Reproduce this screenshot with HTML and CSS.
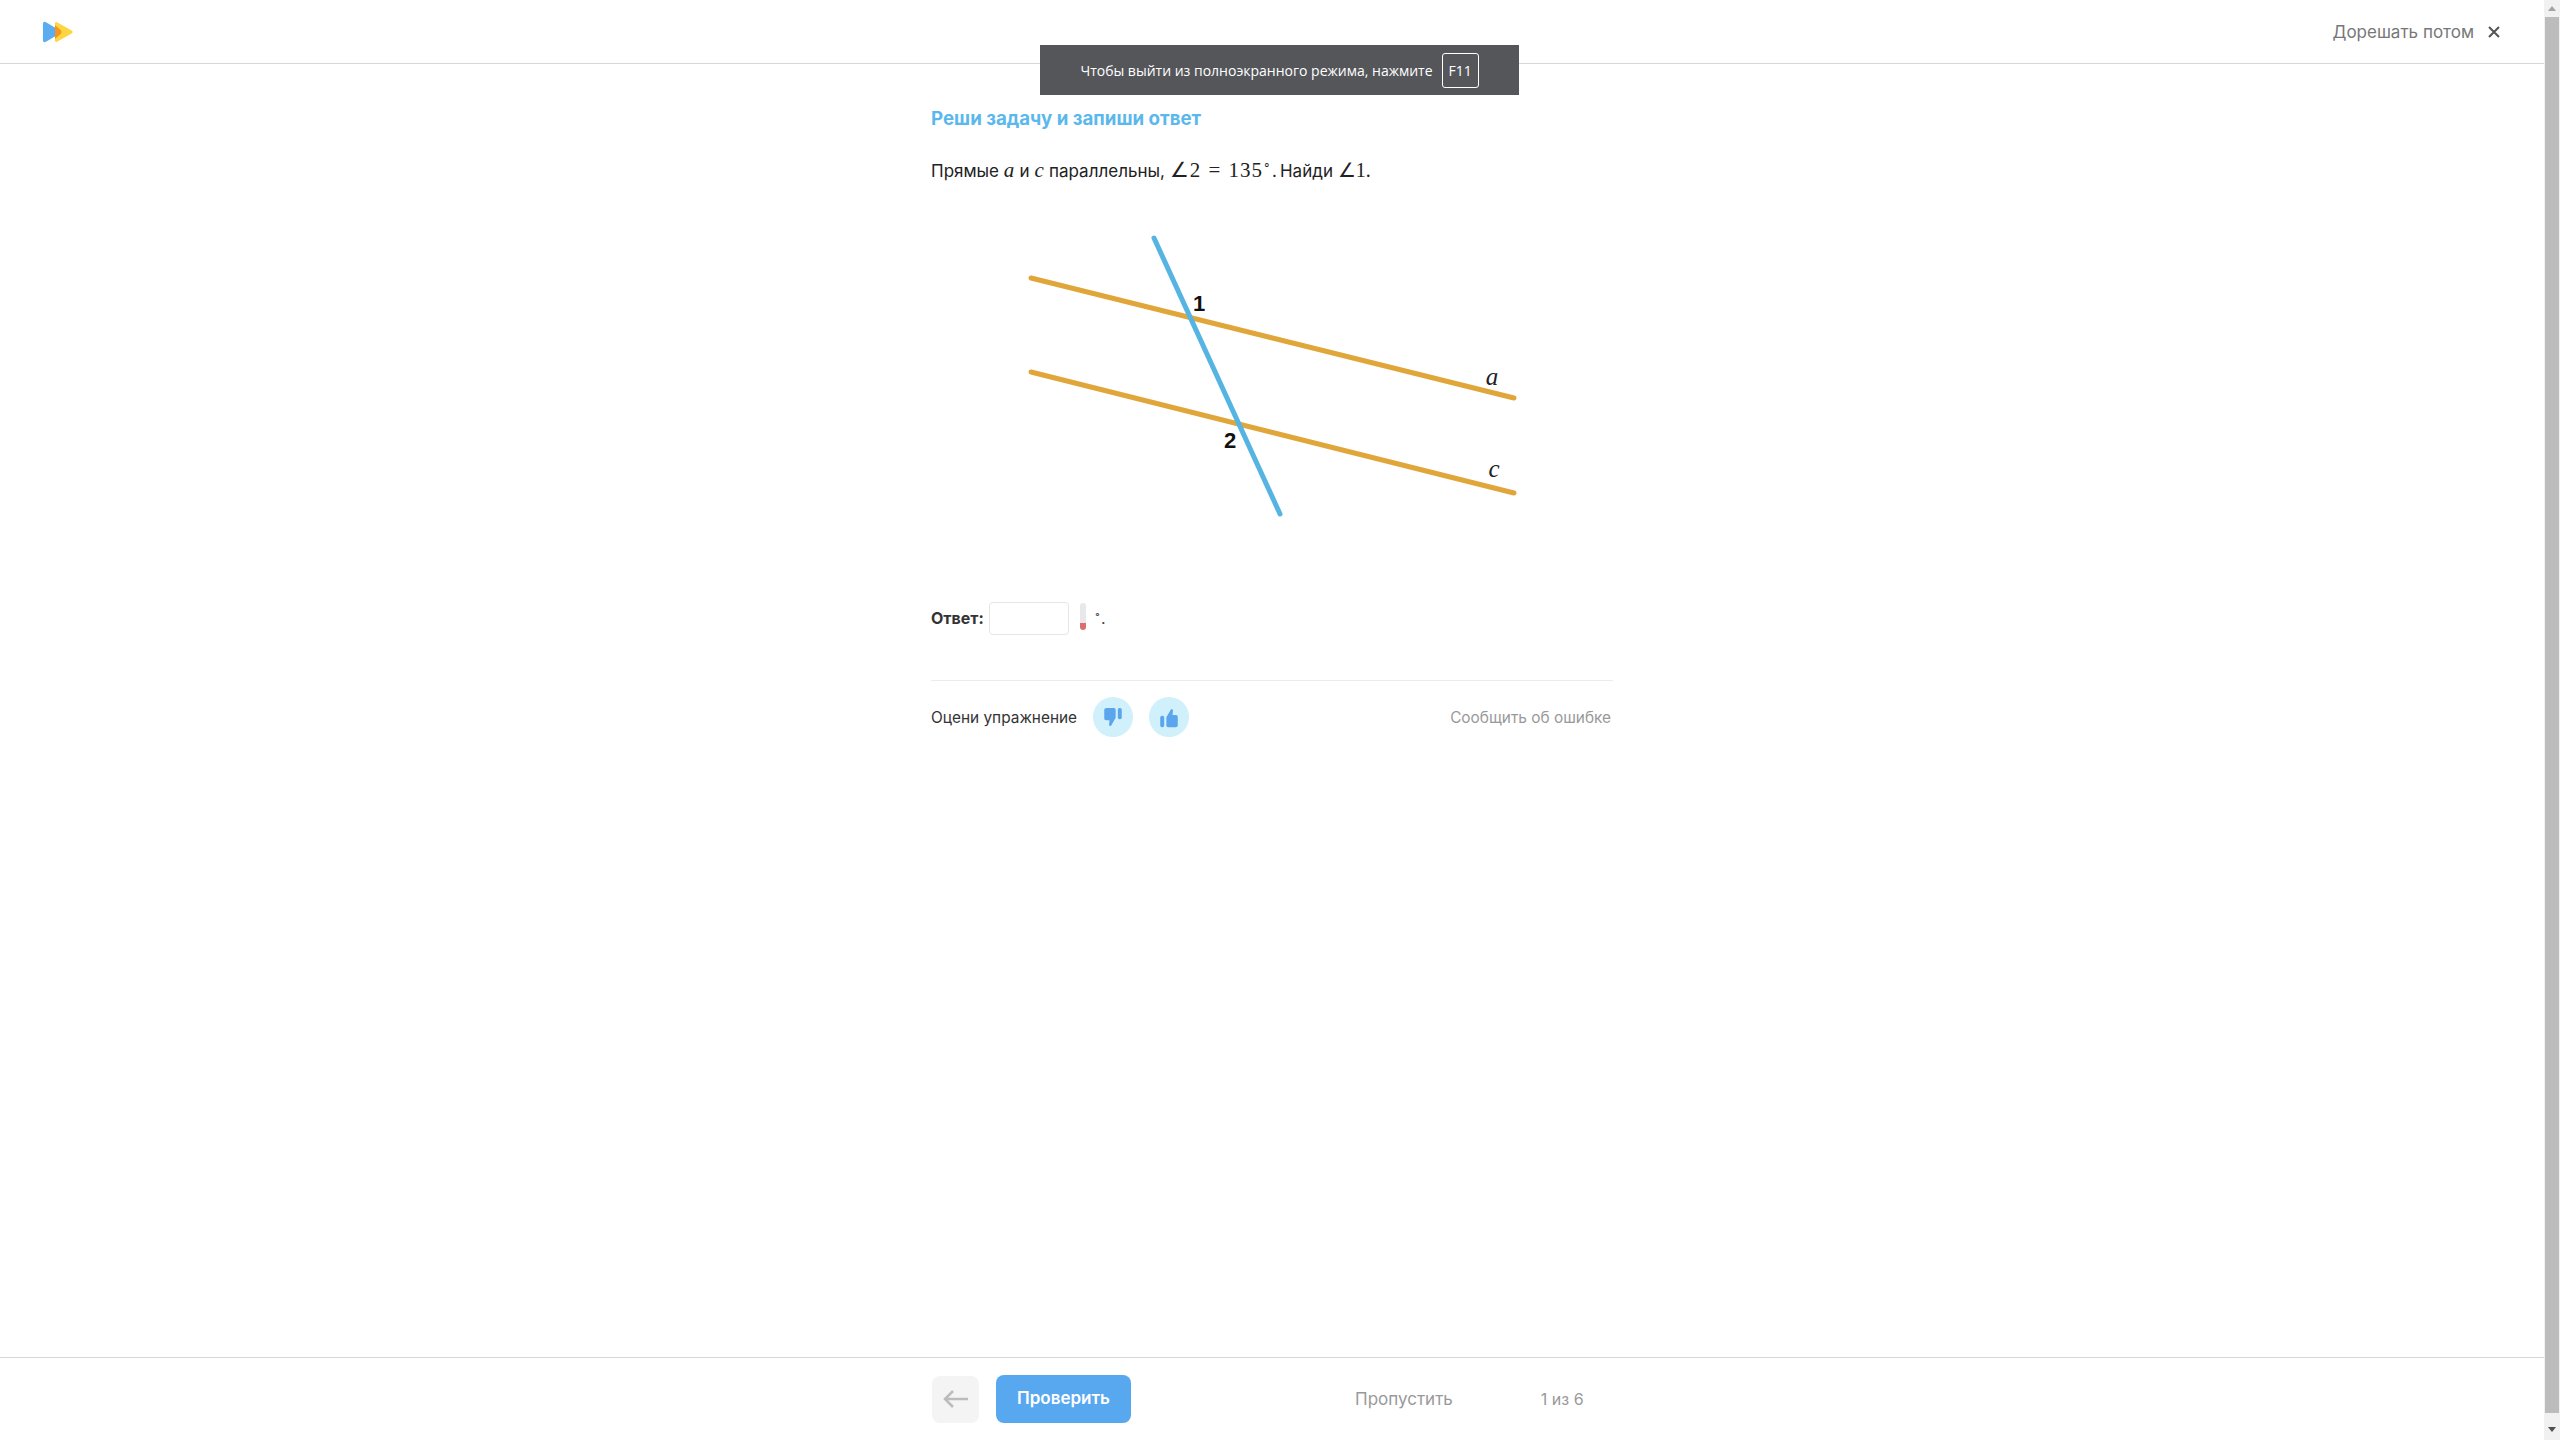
FILE: index.html
```html
<!DOCTYPE html>
<html lang="ru">
<head>
    <meta charset="UTF-8">
    <title>Реши задачу</title>
    <link rel="stylesheet" href="styles.css">
</head>
<body>
    <div class="page">
        <header class="topbar">
            <svg class="logo" width="34" height="28" viewBox="0 0 34 28">
                <path d="M3 5.500 Q3 3 5.500 4 L20 12.500 Q22 14 20 15.500 L5.500 24 Q3 25 3 22.500 Z" fill="#5aaef0"/>
                <path d="M15 5.500 Q15 3.500 17 4.200 L32 12.800 Q33.500 14 32 15.200 L17 23.800 Q15 24.500 15 22.500 Z" fill="#fbd640"/>
                <path d="M15 7 L21 12.500 Q22 14 21 15.500 L15 21 Z" fill="#f7941d"/>
            </svg>
            <div class="later">
                <span>Дорешать потом</span>
                <svg width="14" height="14" viewBox="0 0 14 14"><path d="M2 2 L12 12 M12 2 L2 12" stroke="#555" stroke-width="2"/></svg>
            </div>
        </header>

        <main class="content">
            <h1 class="task-title">Реши задачу и запиши ответ</h1>
            <p class="task-text">Прямые <i class="math">a</i> и <i class="math">c</i> параллельны, <span class="math formula">∠2 = 135<sup>∘</sup></span>.&thinsp;Найди <span class="math angle">∠1.</span></p>

            <svg class="figure" width="682" height="310" viewBox="0 0 682 310">
                <line x1="100" y1="58" x2="583" y2="178" stroke="#e0a63a" stroke-width="5" stroke-linecap="round"/>
                <line x1="100" y1="152" x2="583" y2="273" stroke="#e0a63a" stroke-width="5" stroke-linecap="round"/>
                <line x1="223" y1="18" x2="349" y2="294" stroke="#56b4e3" stroke-width="5" stroke-linecap="round"/>
                <text class="fig-num" x="268" y="91" text-anchor="middle">1</text>
                <text class="fig-num" x="299" y="228" text-anchor="middle">2</text>
                <text class="fig-var" x="561" y="165" text-anchor="middle">a</text>
                <text class="fig-var" x="563" y="257" text-anchor="middle">c</text>
            </svg>

            <div class="answer">
                <b>Ответ:</b>
                <span class="answer-input"></span>
                <span class="thermo"></span>
                <span class="unit"><sup>∘</sup>.</span>
            </div>

            <div class="rate">
                <span class="rate-label">Оцени упражнение</span>
                <button class="rate-btn">
                    <svg width="22" height="24" viewBox="0 0 22 24"><path d="M1 3 Q1 1 3.500 1 L12 1 Q14 1 14 3 L14 12 Q14 13 13 14 L9 21 Q7 23 6.500 20 L7 15 L3 15 Q1 15 1 13 Z" fill="#5aa5ec"/><rect x="16.500" y="1" width="4.500" height="13" rx="2" fill="#5aa5ec"/></svg>
                </button>
                <button class="rate-btn">
                    <svg width="22" height="24" viewBox="0 0 22 24"><path d="M21 21 Q21 23 18.500 23 L10 23 Q8 23 8 21 L8 12 Q8 11 9 10 L13 3 Q15 1 15.500 4 L15 9 L19 9 Q21 9 21 11 Z" fill="#5aa5ec"/><rect x="1" y="10" width="4.500" height="13" rx="2" fill="#5aa5ec"/></svg>
                </button>
                <span class="report">Сообщить об ошибке</span>
            </div>
        </main>

        <footer class="bottombar">
            <div class="bottom-inner">
                <button class="back">
                    <svg width="26" height="18" viewBox="0 0 26 18"><path d="M25 9 L2 9 M10 1 L2 9 L10 17" fill="none" stroke="#bcbcbc" stroke-width="2.500"/></svg>
                </button>
                <button class="check">Проверить</button>
                <span class="skip">Пропустить</span>
                <span class="counter">1 из 6</span>
            </div>
        </footer>
    </div>

    <div class="scrollbar">
        <span class="arrow-up"></span>
        <span class="thumb"></span>
        <span class="arrow-down"></span>
    </div>

    <div class="fs-notice">
        <span>Чтобы выйти из полноэкранного режима, нажмите</span>
        <kbd>F11</kbd>
    </div>
</body>
</html>
```

FILE: styles.css
```css
html, body {
    margin: 0;
    height: 100%;
    overflow: hidden;
}

body {
    display: flex;
    background: #fff;
    color: #222;
    font-family: 'Inter', 'Liberation Sans', sans-serif;
}

.page {
    flex: 1;
    display: flex;
    flex-direction: column;
    height: 1440px;
}

/* Top bar */
.topbar {
    height: 63px;
    flex: none;
    display: flex;
    align-items: center;
    justify-content: space-between;
    border-bottom: 1px solid #d8d8d8;
    padding: 0 43px 0 40px;
}

.later {
    display: flex;
    align-items: center;
    gap: 13px;
    font-size: 17px;
    color: #777;
}

/* Task */
.content {
    flex: 1;
    width: 682px;
    margin-left: 931px;
}

.task-title {
    margin: 43px 0 0;
    font-size: 18.700px;
    line-height: 24px;
    font-weight: 700;
    color: #5bb8ec;
}

.task-text {
    margin: 26px 0 0;
    font-size: 17px;
    line-height: 26px;
    color: #222;
}

.math {
    font-family: 'Liberation Serif', serif;
    font-size: 21px;
    letter-spacing: 0.5px;
}

.formula {
    word-spacing: 1px;
    letter-spacing: 1px;
}

.angle {
    letter-spacing: 0;
    font-size: 20px;
}

.math sup {
    font-size: 12px;
    line-height: 0;
}

.figure {
    display: block;
    margin-top: 36px;
}

.fig-num {
    font-family: 'Liberation Sans', sans-serif;
    font-size: 22px;
    font-weight: 700;
    fill: #111;
}

.fig-var {
    font-family: 'Liberation Serif', serif;
    font-style: italic;
    font-size: 25px;
    fill: #222;
}

/* Answer */
.answer {
    display: flex;
    align-items: center;
    margin-top: 70px;
    height: 36px;
    font-size: 16px;
}

.answer b {
    color: #333;
}

.answer-input {
    width: 78px;
    height: 31px;
    margin-left: 5px;
    border: 1.500px solid #e6e6e6;
    border-radius: 4px;
}

.thermo {
    width: 6px;
    height: 27px;
    margin: -4px 0 0 11px;
    border-radius: 3px;
    background: linear-gradient(#e8e8ec 75%, #d9706f 75%);
}

.unit {
    margin-left: 8px;
    color: #444;
}

.unit sup {
    font-size: 11px;
}

/* Rating */
.rate {
    display: flex;
    align-items: center;
    gap: 16px;
    margin-top: 44px;
    padding-top: 16px;
    border-top: 1px solid #ececec;
}

.rate-label {
    width: 146px;
    font-size: 15.400px;
    color: #333;
    white-space: nowrap;
}

.rate-btn {
    width: 40px;
    height: 40px;
    padding: 0;
    border: 0;
    border-radius: 50%;
    background: #d0f0fb;
    display: flex;
    align-items: center;
    justify-content: center;
}

.rate-btn svg {
    width: 20px;
    height: 21px;
}

.report {
    margin-left: auto;
    margin-right: 2px;
    font-size: 15.400px;
    color: #999;
}

/* Bottom bar */
.bottombar {
    height: 82px;
    flex: none;
    border-top: 1px solid #d8d8d8;
}

.bottom-inner {
    display: flex;
    align-items: center;
    height: 100%;
    margin-left: 932px;
}

.back {
    width: 47px;
    height: 47px;
    padding: 0;
    border: 0;
    border-radius: 8px;
    background: #f4f4f4;
    display: flex;
    align-items: center;
    justify-content: center;
}

.check {
    width: 135px;
    height: 48px;
    margin-left: 17px;
    padding: 0 0 2px;
    border: 0;
    border-radius: 8px;
    background: #58a8f0;
    color: #fff;
    font-family: inherit;
    font-size: 17px;
    font-weight: 600;
}

.skip {
    margin-left: 224px;
    font-size: 17px;
    color: #999;
}

.counter {
    margin-left: 88px;
    font-size: 16px;
    color: #999;
}

/* Scrollbar */
.scrollbar {
    width: 16px;
    height: 1440px;
    flex: none;
    background: #f1f1f1;
    display: flex;
    flex-direction: column;
    align-items: center;
}

.thumb {
    width: 14px;
    flex: 1;
    background: #bcbcbc;
}

.arrow-up, .arrow-down {
    width: 0;
    height: 0;
    flex: none;
    border-left: 4px solid transparent;
    border-right: 4px solid transparent;
}

.arrow-up {
    margin: 6px 0 6px;
    border-bottom: 5px solid #a3a3a3;
}

.arrow-down {
    margin: 14px 0 8px;
    border-top: 5px solid #505050;
}

/* Fullscreen notice */
.fs-notice {
    position: absolute;
    left: 1040px;
    top: 45px;
    width: 479px;
    height: 50px;
    display: flex;
    align-items: center;
    justify-content: center;
    gap: 9px;
    background: #55565a;
    color: #fff;
    font-family: 'Open Sans', 'Liberation Sans', sans-serif;
    font-size: 14px;
}

.fs-notice kbd {
    width: 35px;
    height: 33px;
    display: flex;
    align-items: center;
    justify-content: center;
    border: 1px solid #fff;
    border-radius: 3px;
    font-family: inherit;
    font-size: 14px;
}
```
